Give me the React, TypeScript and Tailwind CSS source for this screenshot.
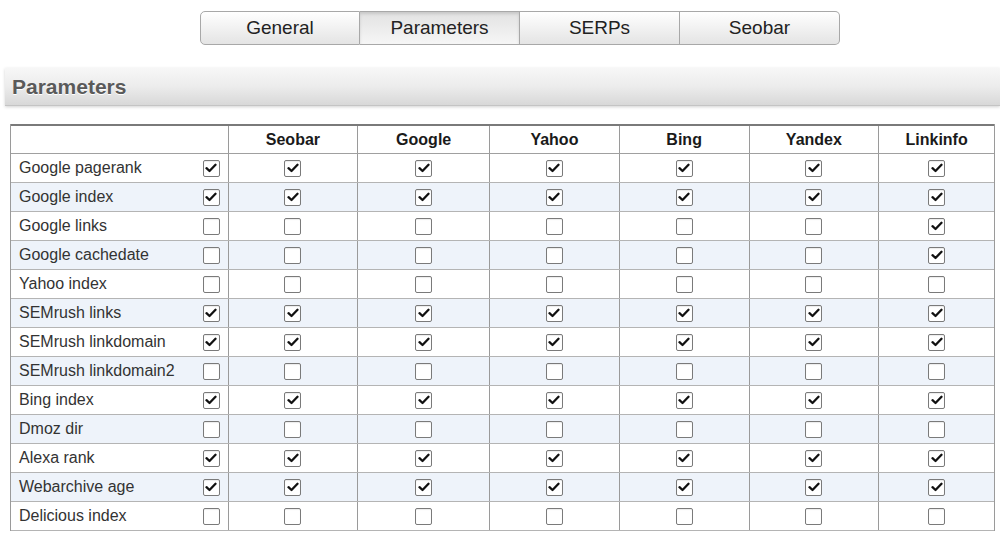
import React from "react";

const cols = ["Seobar", "Google", "Yahoo", "Bing", "Yandex", "Linkinfo"];
const colW = ["w-[130px]", "w-[132px]", "w-[130px]", "w-[130px]", "w-[130px]", "w-[115px]"];

const rows: [string, boolean[]][] = [
  ["Google pagerank", [true, true, true, true, true, true, true]],
  ["Google index", [true, true, true, true, true, true, true]],
  ["Google links", [false, false, false, false, false, false, true]],
  ["Google cachedate", [false, false, false, false, false, false, true]],
  ["Yahoo index", [false, false, false, false, false, false, false]],
  ["SEMrush links", [true, true, true, true, true, true, true]],
  ["SEMrush linkdomain", [true, true, true, true, true, true, true]],
  ["SEMrush linkdomain2", [false, false, false, false, false, false, false]],
  ["Bing index", [true, true, true, true, true, true, true]],
  ["Dmoz dir", [false, false, false, false, false, false, false]],
  ["Alexa rank", [true, true, true, true, true, true, true]],
  ["Webarchive age", [true, true, true, true, true, true, true]],
  ["Delicious index", [false, false, false, false, false, false, false]],
];

function Box({ on }: { on: boolean }) {
  return (
    <div className="w-[17px] h-[17px] border border-[#7a7a7a] rounded-[2px] bg-white flex items-center justify-center shadow-[inset_0_1px_1px_rgba(0,0,0,0.08)]">
      {on && (
        <svg width="12" height="10" viewBox="0 0 12 10">
          <path d="M1.5 5.2 L4.5 8 L10.5 1.8" fill="none" stroke="#111" strokeWidth="2.3" strokeLinecap="round" strokeLinejoin="round" />
        </svg>
      )}
    </div>
  );
}

export default function App() {
  const tabs = ["General", "Parameters", "SERPs", "Seobar"];
  return (
    <div className="w-[1000px] h-[541px] bg-white overflow-hidden font-['Liberation_Sans',Arial,sans-serif] text-[#333]">
      <div className="flex pt-[11px] pl-[200px]">
        <div className="flex">
          {tabs.map((t, i) => (
            <div
              key={t}
              className={
                "w-[160px] h-[34px] flex items-center justify-center text-[19px] text-[#222] border border-[#a8a8a8] " +
                (i === 0 ? "rounded-l-[5px] " : "") +
                (i === 3 ? "rounded-r-[5px] " : "") +
                (i > 0 ? "border-l-0 " : "") +
                (i === 1
                  ? "bg-gradient-to-b from-[#e2e2e2] to-[#f6f6f6] shadow-[inset_0_2px_3px_rgba(0,0,0,0.12)]"
                  : "bg-gradient-to-b from-[#ffffff] to-[#e4e4e4]")
              }
            >
              {t}
            </div>
          ))}
        </div>
      </div>

      <div className="mt-[23px] ml-[5px] h-[38px] flex items-center pl-[7px] bg-gradient-to-b from-[#f7f7f7] via-[#ececec] to-[#d8d8d8] border-b border-[#c4c4c4] shadow-[0_1px_3px_rgba(0,0,0,0.18)]">
        <span className="text-[21px] font-bold text-[#5a5a5a] [text-shadow:0_1px_0_#fff]">Parameters</span>
      </div>

      <div className="mt-[18px] ml-[10px] w-[985px] border-l border-r border-[#9a9a9a]">
        <div className="flex h-[30px] border-t-2 border-[#7a7a7a] border-b border-b-[#a0a0a0]">
          <div className="w-[218px] border-r border-[#9a9a9a]" />
          {cols.map((c, i) => (
            <div
              key={c}
              className={
                colW[i] +
                " flex items-center justify-center text-[16px] font-bold text-[#1a1a1a] " +
                (i < cols.length - 1 ? "border-r border-[#9a9a9a]" : "")
              }
            >
              {c}
            </div>
          ))}
        </div>
        {rows.map(([label, vals], r) => (
          <div
            key={label}
            className={
              "flex h-[29px] border-b border-[#b4b4b4] " + (r % 2 === 1 ? "bg-[#eef3fa]" : "bg-white")
            }
          >
            <div className="w-[218px] flex items-center justify-between pl-[8px] pr-[8px] border-r border-[#9a9a9a]">
              <span className="text-[16px] text-[#333]">{label}</span>
              <Box on={vals[0]} />
            </div>
            {cols.map((c, i) => (
              <div
                key={c}
                className={
                  colW[i] +
                  " flex items-center justify-center " +
                  (i < cols.length - 1 ? "border-r border-[#9a9a9a]" : "")
                }
              >
                <Box on={vals[i + 1]} />
              </div>
            ))}
          </div>
        ))}
      </div>
    </div>
  );
}
